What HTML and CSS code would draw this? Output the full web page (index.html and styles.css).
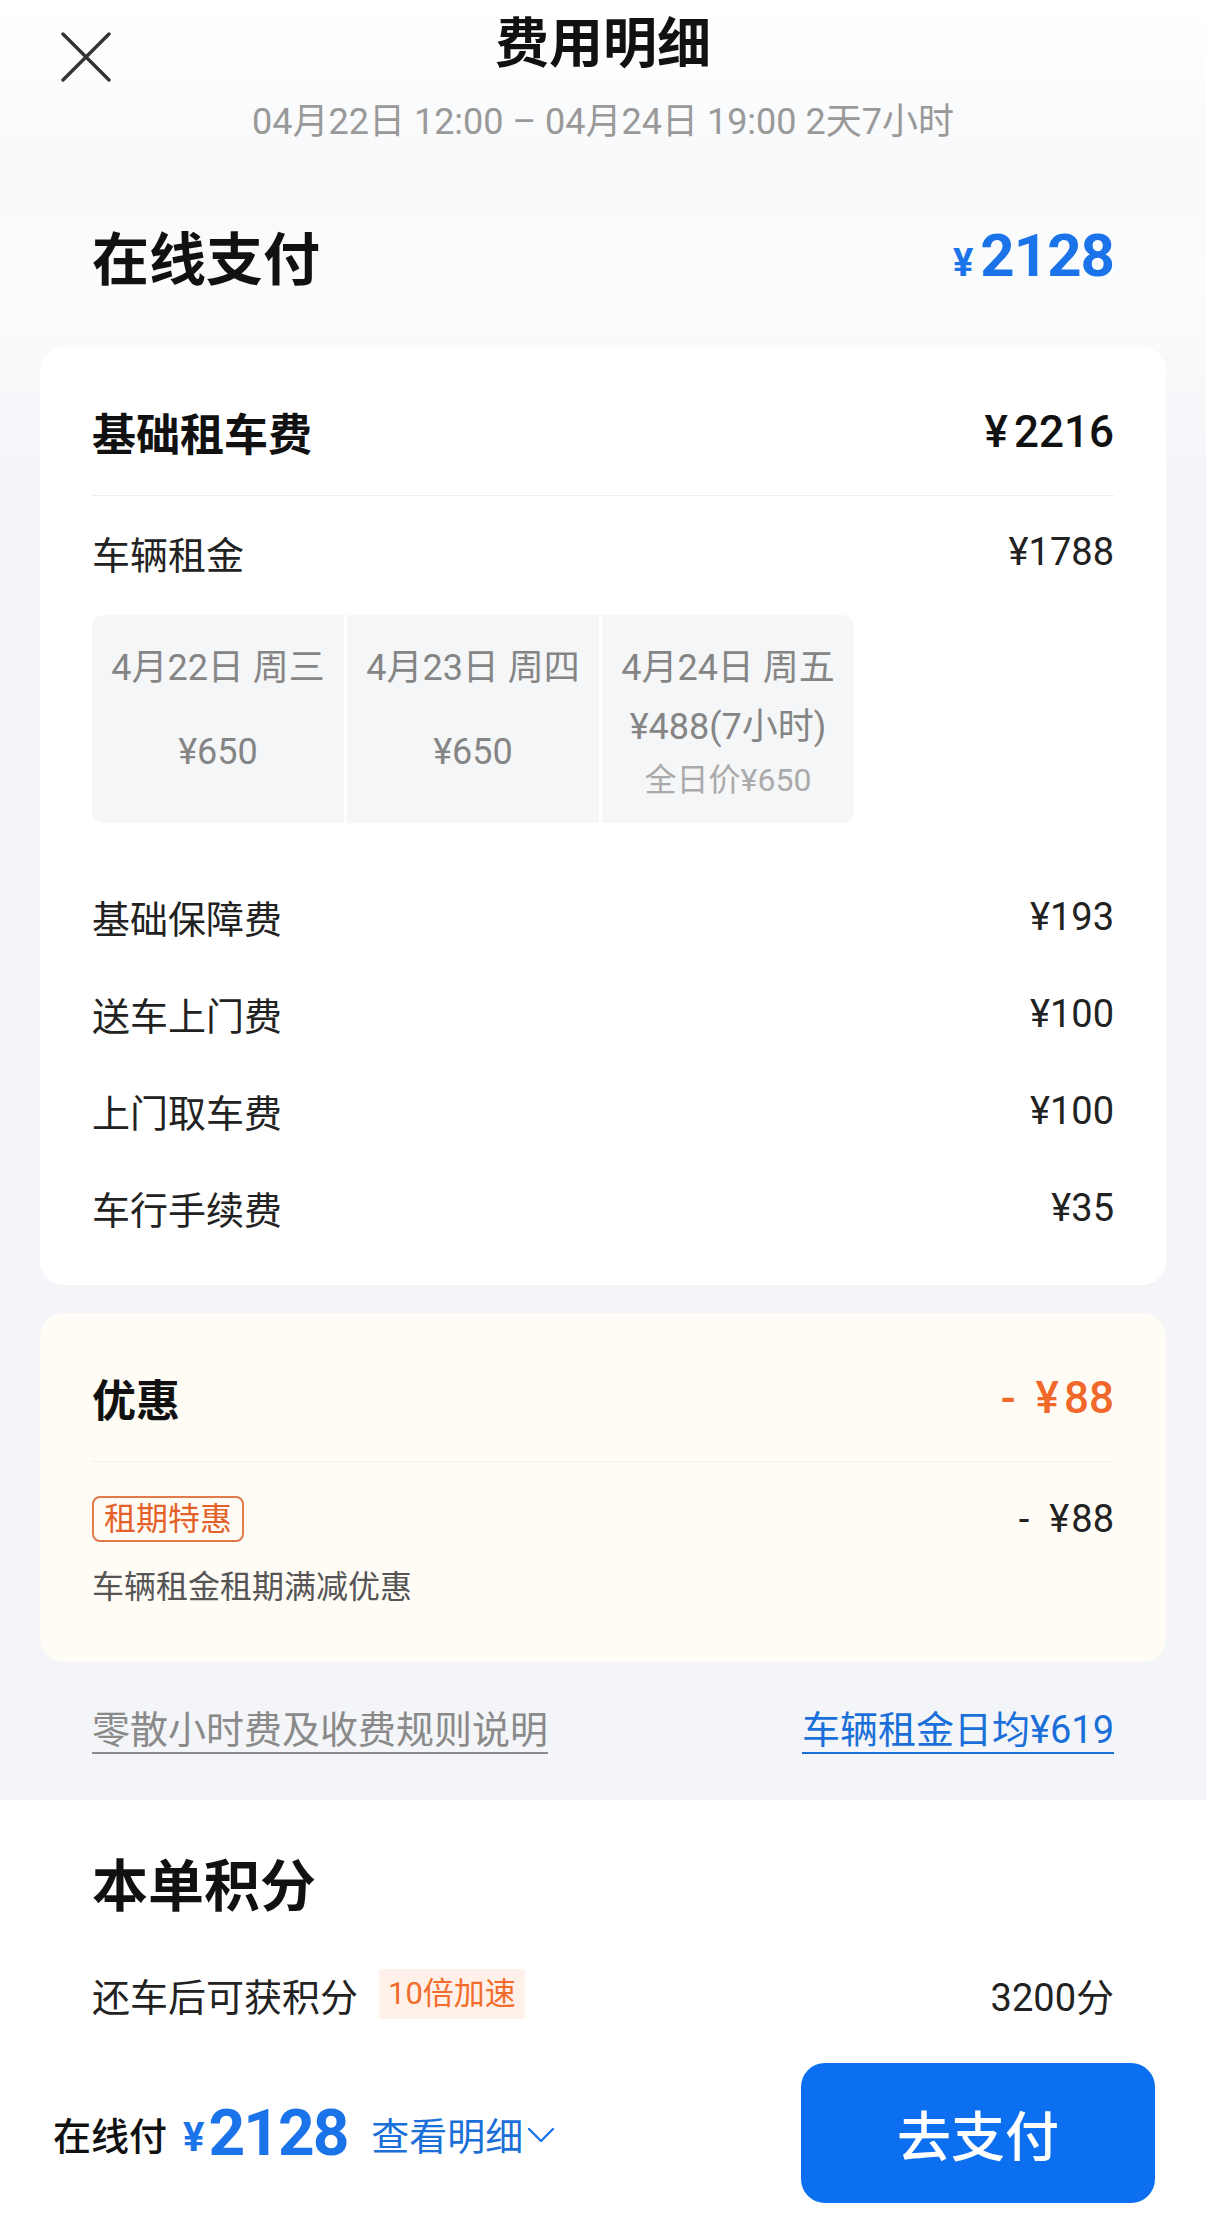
FILE: index.html
```html
<!DOCTYPE html>
<html lang="zh-CN">
<head>
    <meta charset="UTF-8">
    <title>费用明细</title>
    <link rel="stylesheet" href="styles.css">
</head>
<body>
    <div class="sheet">
        <div class="main">
            <header class="topbar">
                <button class="close" aria-label="关闭">
                    <svg width="50" height="50" viewBox="0 0 50 50">
                        <path d="M2 2 L48 48 M48 2 L2 48" stroke="#333" stroke-width="3.4" stroke-linecap="round" fill="none"/>
                    </svg>
                </button>
                <h1 class="title">费用明细</h1>
                <span></span>
            </header>
            <p class="period">04月22日 12:00 – 04月24日 19:00 2天7小时</p>

            <div class="pay-total">
                <span class="pay-label">在线支付</span>
                <span class="pay-amount"><span class="yen">¥</span>2128</span>
            </div>

            <section class="card">
                <div class="card-head">
                    <span>基础租车费</span>
                    <span class="head-amount"><span class="yen">¥</span>2216</span>
                </div>
                <div class="rent-row">
                    <span>车辆租金</span>
                    <span>¥1788</span>
                </div>
                <div class="days">
                    <div class="day">
                        <div class="day-date">4月22日 周三</div>
                        <div class="day-price"><span class="line">¥650</span></div>
                    </div>
                    <div class="day">
                        <div class="day-date">4月23日 周四</div>
                        <div class="day-price"><span class="line">¥650</span></div>
                    </div>
                    <div class="day">
                        <div class="day-date">4月24日 周五</div>
                        <div class="day-price">
                            <span class="line">¥488(7小时)</span>
                            <span class="day-full">全日价¥650</span>
                        </div>
                    </div>
                </div>
                <div class="fees">
                    <div class="fee-row"><span>基础保障费</span><span>¥193</span></div>
                    <div class="fee-row"><span>送车上门费</span><span>¥100</span></div>
                    <div class="fee-row"><span>上门取车费</span><span>¥100</span></div>
                    <div class="fee-row"><span>车行手续费</span><span>¥35</span></div>
                </div>
            </section>

            <section class="card promo">
                <div class="card-head">
                    <span>优惠</span>
                    <span class="head-amount discount">-<span class="yen">¥</span>88</span>
                </div>
                <div class="promo-row">
                    <span class="tag">租期特惠</span>
                    <span class="promo-amount">-<span class="yen">¥</span>88</span>
                </div>
                <div class="promo-desc">车辆租金租期满减优惠</div>
            </section>

            <div class="links">
                <a class="link-rule">零散小时费及收费规则说明</a>
                <a class="link-avg">车辆租金日均¥619</a>
            </div>
        </div>

        <section class="points">
            <h2 class="points-title">本单积分</h2>
            <div class="points-row">
                <span class="points-label">还车后可获积分</span>
                <span class="boost">10倍加速</span>
                <span class="points-value">3200分</span>
            </div>
        </section>

        <footer class="paybar">
            <span class="paybar-label">在线付</span>
            <span class="paybar-yen">¥</span>
            <span class="paybar-amount">2128</span>
            <span class="paybar-detail">查看明细</span>
            <svg class="chevron" width="28" height="18" viewBox="0 0 28 18">
                <polyline points="2,3 14,15 26,3" stroke="#1a73e8" stroke-width="2.4" fill="none" stroke-linecap="round" stroke-linejoin="round"/>
            </svg>
            <button class="pay-btn">去支付</button>
        </footer>
    </div>
</body>
</html>
```

FILE: styles.css
```css
body {
    margin: 0;
    font-family: Roboto, "Noto Sans CJK SC", sans-serif;
    color: #1a1a1a;
    background: #fff;
}
.sheet {
    width: 1206px;
    min-height: 2220px;
    background: #fff;
}
.main {
    background: linear-gradient(180deg, #fff 0, #f8f9fb 170px, #fbfcfd 280px, #f3f5f8 480px);
    padding-bottom: 46px;
}

/* header */
.topbar {
    display: grid;
    grid-template-columns: 1fr auto 1fr;
    height: 90px;
}
.close {
    align-self: start;
    justify-self: start;
    margin: 32px 0 0 61px;
    width: 50px;
    height: 50px;
    padding: 0;
    border: 0;
    background: none;
}
.close svg {
    display: block;
}
.title {
    margin: 0;
    font-size: 54px;
    font-weight: 700;
    line-height: 90px;
    color: #111;
}
.period {
    margin: 7px 0 0;
    text-align: center;
    font-size: 36px;
    line-height: 50px;
    color: #999;
}
.pay-total {
    display: flex;
    justify-content: space-between;
    align-items: center;
    height: 80px;
    margin-top: 68px;
    padding: 0 92px;
}
.pay-label {
    font-size: 57px;
    font-weight: 700;
    color: #111;
}
.pay-amount {
    color: #1a73e8;
    font-size: 60px;
    font-weight: 700;
    letter-spacing: -1px;
}
.pay-amount .yen {
    font-size: 38px;
    margin-right: 8px;
}

/* cards */
.card {
    margin: 52px 40px 0;
    background: #fff;
    border-radius: 24px;
    padding: 55px 52px 29px;
}
.card-head {
    display: flex;
    justify-content: space-between;
    align-items: center;
    height: 60px;
    padding-bottom: 33px;
    border-bottom: 1px solid #eceef1;
    font-size: 44px;
    font-weight: 700;
    color: #111;
}
.head-amount {
    font-weight: 500;
}
.head-amount .yen {
    margin-right: 6px;
}
.rent-row {
    display: flex;
    justify-content: space-between;
    align-items: center;
    height: 50px;
    margin-top: 31px;
    font-size: 38px;
    color: #222;
}
.days {
    display: flex;
    gap: 3px;
    width: 762px;
    margin-top: 38px;
    border-radius: 12px;
    overflow: hidden;
}
.day {
    flex: 0 0 252px;
    box-sizing: border-box;
    height: 208px;
    padding: 33px 0 7px;
    display: flex;
    flex-direction: column;
    align-items: center;
    background: #f5f6f8;
    color: #858585;
    font-size: 36px;
}
.day-date {
    line-height: 40px;
}
.day-price {
    flex: 1;
    display: flex;
    flex-direction: column;
    justify-content: center;
    align-items: center;
}
.day-price .line {
    line-height: 44px;
}
.day-full {
    margin-top: 11px;
    font-size: 32px;
    line-height: 40px;
    color: #aaa;
}
.fees {
    margin-top: 45px;
}
.fee-row {
    display: flex;
    justify-content: space-between;
    align-items: center;
    height: 97px;
    font-size: 38px;
    color: #222;
}

/* promo */
.promo {
    margin-top: 28px;
    background: #fffcf6;
    padding-bottom: 52px;
}
.promo .card-head {
    border-bottom-color: #f4efe7;
}
.discount {
    color: #f0692a;
}
.discount .yen {
    margin: 0 5px 0 20px;
}
.promo-row {
    display: flex;
    justify-content: space-between;
    align-items: center;
    margin-top: 34px;
    height: 46px;
}
.tag {
    box-sizing: border-box;
    height: 46px;
    padding: 0 10px;
    border: 2px solid #e27a4c;
    border-radius: 8px;
    font-size: 32px;
    line-height: 42px;
    color: #e4622a;
}
.promo-amount {
    font-size: 38px;
    color: #222;
}
.promo-amount .yen {
    margin-left: 20px;
    margin-right: 2px;
}
.promo-desc {
    margin-top: 22px;
    font-size: 32px;
    line-height: 46px;
    color: #555;
}

/* links */
.links {
    display: flex;
    justify-content: space-between;
    margin: 46px 92px 0;
}
.links a {
    font-size: 38px;
    line-height: 44px;
    border-bottom: 2px solid;
}
.link-rule {
    color: #8a8a8a;
    border-color: #999;
}
.link-avg {
    color: #1a6fd8;
    border-color: #1a73e8;
}

/* points */
.points {
    padding: 52px 92px 0;
}
.points-title {
    margin: 0;
    font-size: 56px;
    font-weight: 700;
    line-height: 70px;
    color: #111;
}
.points-row {
    display: flex;
    align-items: center;
    height: 50px;
    margin-top: 47px;
    font-size: 38px;
    color: #222;
}
.boost {
    margin-left: 21px;
    padding: 0 9px;
    height: 50px;
    line-height: 50px;
    font-size: 31px;
    color: #f26d2b;
    background: #fff1ea;
    border-radius: 4px;
}
.points-value {
    margin-left: auto;
}

/* bottom bar */
.paybar {
    display: flex;
    align-items: center;
    height: 140px;
    margin-top: 44px;
    padding: 0 51px 0 53px;
}
.paybar-label {
    font-size: 38px;
    font-weight: 500;
    color: #111;
}
.paybar-yen {
    margin-left: 16px;
    font-size: 40px;
    font-weight: 700;
    color: #1a73e8;
    padding-top: 8px;
}
.paybar-amount {
    margin-left: 4px;
    font-size: 64px;
    font-weight: 700;
    letter-spacing: -2px;
    color: #1a73e8;
}
.paybar-detail {
    margin-left: 24px;
    font-size: 38px;
    color: #1a6fd8;
}
.chevron {
    margin-left: 4px;
    margin-top: 4px;
}
.pay-btn {
    margin-left: auto;
    width: 354px;
    height: 140px;
    border: 0;
    border-radius: 24px;
    background: #0b6ff0;
    color: #fff;
    font-family: Roboto, "Noto Sans CJK SC", sans-serif;
    font-size: 54px;
    font-weight: 500;
}
```
